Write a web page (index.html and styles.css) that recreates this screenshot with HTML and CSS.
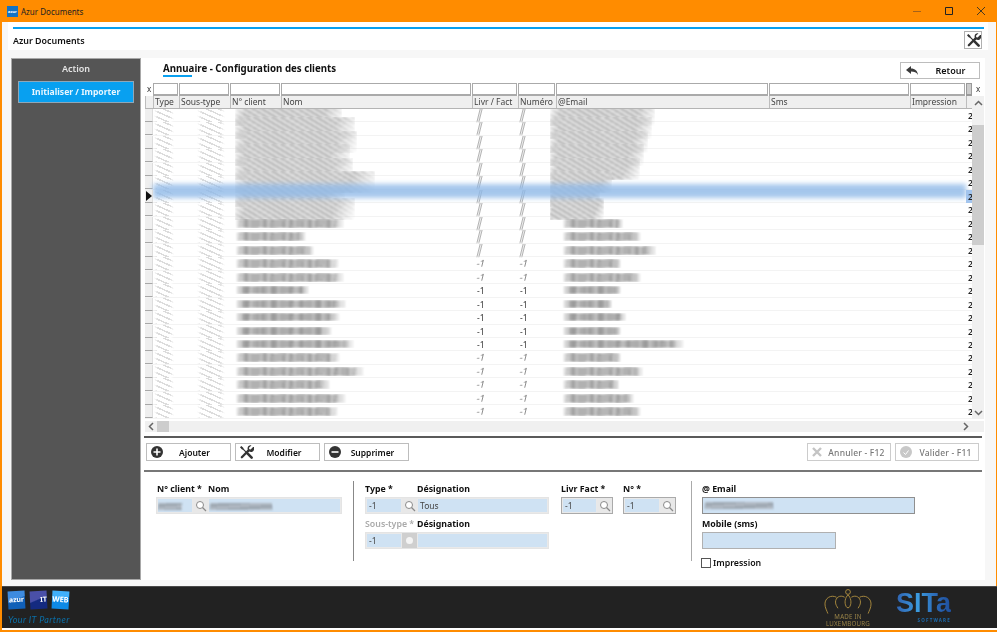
FILE: index.html
```html
<!DOCTYPE html>
<html lang="fr">
<head>
<meta charset="utf-8">
<title>Azur Documents</title>
<link rel="stylesheet" href="styles.css">
</head>
<body>
<header class="titlebar">
  <span class="app-ico">azur</span>
  <span class="app-name">Azur Documents</span>
  <span class="win-ctl">
    <svg width="12" height="12" viewBox="0 0 12 12"><path d="M2 6.500h8" stroke="#a5621a" fill="none"/></svg>
    <svg width="12" height="12" viewBox="0 0 12 12"><path d="M2.500 2.500h7v7h-7z" stroke="#222" fill="none"/></svg>
    <svg width="12" height="12" viewBox="0 0 12 12"><path d="M2 2l8 8M10 2l-8 8" stroke="#4a3a20" fill="none"/></svg>
  </span>
</header>
<div class="client">
  <div class="appbar">
    <div class="appbar-in">
      <strong>Azur Documents</strong>
      <button class="tool-btn"><svg width="15" height="15" viewBox="0 0 16 16"><use href="#tools"/></svg></button>
    </div>
  </div>
  <div class="work">
    <aside class="side">
      <div class="side-title">Action</div>
      <button class="side-btn">Initialiser / Importer</button>
    </aside>
    <main class="panel">
      <div class="panel-head">
        <h1 class="panel-title">Annuaire - Configuration des clients</h1>
        <button class="btn back"><svg width="14" height="12" viewBox="0 0 14 12"><path d="M1 5l5-4v2.600c4 0 6.500 2.200 7 6.400-1.500-2.600-3.700-3.400-7-3.400V9z" fill="#3a3a3a"/></svg><span>Retour</span></button>
      </div>
      <section class="grid">
        <div class="table">
          <div class="row filters"><div class="x">x</div><div class="f"></div><div class="f"></div><div class="f"></div><div class="f"></div><div class="f"></div><div class="f"></div><div class="f"></div><div class="f"></div><div class="f"></div><div class="f n"></div></div>
          <div class="row heads"><div></div><div>Type</div><div>Sous-type</div><div>N° client</div><div>Nom</div><div>Livr / Fact</div><div>Numéro</div><div>@Email</div><div>Sms</div><div>Impression</div><div></div></div>
          <div class="rows">
            <div class="row r s2"><div class="h"></div><div class="t"></div><div class="st"></div><div class="cl"><span class="sm" style="width:107px"></span></div><div></div><div class="lv"></div><div class="nm"></div><div class="em"><span class="sm" style="width:105px"></span></div><div></div><div></div><div class="d">2</div></div>
            <div class="row r s2"><div class="h"></div><div class="t"></div><div class="st"></div><div class="cl"><span class="sm" style="width:120px"></span></div><div></div><div class="lv"></div><div class="nm"></div><div class="em"><span class="sm" style="width:102px"></span></div><div></div><div></div><div class="d">2</div></div>
            <div class="row r s2"><div class="h"></div><div class="t"></div><div class="st"></div><div class="cl"><span class="sm" style="width:122px"></span></div><div></div><div class="lv"></div><div class="nm"></div><div class="em"><span class="sm" style="width:98px"></span></div><div></div><div></div><div class="d">2</div></div>
            <div class="row r s2"><div class="h"></div><div class="t"></div><div class="st"></div><div class="cl"><span class="sm" style="width:115px"></span></div><div></div><div class="lv"></div><div class="nm"></div><div class="em"><span class="sm" style="width:94px"></span></div><div></div><div></div><div class="d">2</div></div>
            <div class="row r s2"><div class="h"></div><div class="t"></div><div class="st"></div><div class="cl"><span class="sm" style="width:118px"></span></div><div></div><div class="lv"></div><div class="nm"></div><div class="em"><span class="sm" style="width:90px"></span></div><div></div><div></div><div class="d">2</div></div>
            <div class="row r s2"><div class="h"></div><div class="t"></div><div class="st"></div><div class="cl"><span class="sm" style="width:140px"></span></div><div></div><div class="lv"></div><div class="nm"></div><div class="em"><span class="sm" style="width:62px"></span></div><div></div><div></div><div class="d">2</div></div>
            <div class="row r s2 sel"><div class="h"><svg width="6" height="10" viewBox="0 0 6 10"><path d="M0 0l6 5-6 5z" fill="#111"/></svg></div><div class="t"></div><div class="st"></div><div class="cl"><span class="sm" style="width:110px"></span></div><div></div><div class="lv"></div><div class="nm"></div><div class="em"><span class="sm" style="width:50px"></span></div><div></div><div></div><div class="d">2</div></div>
            <div class="row r s2"><div class="h"></div><div class="t"></div><div class="st"></div><div class="cl"><span class="sm" style="width:120px"></span></div><div></div><div class="lv"></div><div class="nm"></div><div class="em"><span class="sm" style="width:54px"></span></div><div></div><div></div><div class="d">2</div></div>
            <div class="row r s1"><div class="h"></div><div class="t"></div><div class="st"></div><div class="cl"><span class="sm" style="width:110px"></span></div><div></div><div class="lv"></div><div class="nm"></div><div class="em"><span class="sm" style="width:62px"></span></div><div></div><div></div><div class="d">2</div></div>
            <div class="row r s1"><div class="h"></div><div class="t"></div><div class="st"></div><div class="cl"><span class="sm" style="width:72px"></span></div><div></div><div class="lv"></div><div class="nm"></div><div class="em"><span class="sm" style="width:80px"></span></div><div></div><div></div><div class="d">2</div></div>
            <div class="row r s1"><div class="h"></div><div class="t"></div><div class="st"></div><div class="cl"><span class="sm" style="width:80px"></span></div><div></div><div class="lv"></div><div class="nm"></div><div class="em"><span class="sm" style="width:95px"></span></div><div></div><div></div><div class="d">2</div></div>
            <div class="row r s1"><div class="h"></div><div class="t"></div><div class="st"></div><div class="cl"><span class="sm" style="width:105px"></span></div><div></div><div class="lv">-1</div><div class="nm">-1</div><div class="em"><span class="sm" style="width:60px"></span></div><div></div><div></div><div class="d">2</div></div>
            <div class="row r s1"><div class="h"></div><div class="t"></div><div class="st"></div><div class="cl"><span class="sm" style="width:110px"></span></div><div></div><div class="lv">-1</div><div class="nm">-1</div><div class="em"><span class="sm" style="width:80px"></span></div><div></div><div></div><div class="d">2</div></div>
            <div class="row r s0"><div class="h"></div><div class="t"></div><div class="st"></div><div class="cl"><span class="sm" style="width:75px"></span></div><div></div><div class="lv">-1</div><div class="nm">-1</div><div class="em"><span class="sm" style="width:60px"></span></div><div></div><div></div><div class="d">2</div></div>
            <div class="row r s0"><div class="h"></div><div class="t"></div><div class="st"></div><div class="cl"><span class="sm" style="width:112px"></span></div><div></div><div class="lv">-1</div><div class="nm">-1</div><div class="em"><span class="sm" style="width:51px"></span></div><div></div><div></div><div class="d">2</div></div>
            <div class="row r s0"><div class="h"></div><div class="t"></div><div class="st"></div><div class="cl"><span class="sm" style="width:106px"></span></div><div></div><div class="lv">-1</div><div class="nm">-1</div><div class="em"><span class="sm" style="width:65px"></span></div><div></div><div></div><div class="d">2</div></div>
            <div class="row r s0"><div class="h"></div><div class="t"></div><div class="st"></div><div class="cl"><span class="sm" style="width:98px"></span></div><div></div><div class="lv">-1</div><div class="nm">-1</div><div class="em"><span class="sm" style="width:60px"></span></div><div></div><div></div><div class="d">2</div></div>
            <div class="row r s0"><div class="h"></div><div class="t"></div><div class="st"></div><div class="cl"><span class="sm" style="width:120px"></span></div><div></div><div class="lv">-1</div><div class="nm">-1</div><div class="em"><span class="sm" style="width:123px"></span></div><div></div><div></div><div class="d">2</div></div>
            <div class="row r s1"><div class="h"></div><div class="t"></div><div class="st"></div><div class="cl"><span class="sm" style="width:106px"></span></div><div></div><div class="lv">-1</div><div class="nm">-1</div><div class="em"><span class="sm" style="width:60px"></span></div><div></div><div></div><div class="d">2</div></div>
            <div class="row r s1"><div class="h"></div><div class="t"></div><div class="st"></div><div class="cl"><span class="sm" style="width:130px"></span></div><div></div><div class="lv">-1</div><div class="nm">-1</div><div class="em"><span class="sm" style="width:82px"></span></div><div></div><div></div><div class="d">2</div></div>
            <div class="row r s1"><div class="h"></div><div class="t"></div><div class="st"></div><div class="cl"><span class="sm" style="width:96px"></span></div><div></div><div class="lv">-1</div><div class="nm">-1</div><div class="em"><span class="sm" style="width:58px"></span></div><div></div><div></div><div class="d">2</div></div>
            <div class="row r s1"><div class="h"></div><div class="t"></div><div class="st"></div><div class="cl"><span class="sm" style="width:112px"></span></div><div></div><div class="lv">-1</div><div class="nm">-1</div><div class="em"><span class="sm" style="width:73px"></span></div><div></div><div></div><div class="d">2</div></div>
            <div class="row r s1"><div class="h"></div><div class="t"></div><div class="st"></div><div class="cl"><span class="sm" style="width:104px"></span></div><div></div><div class="lv">-1</div><div class="nm">-1</div><div class="em"><span class="sm" style="width:80px"></span></div><div></div><div></div><div class="d">2</div></div>
          </div>
        </div>
        <div class="vbar">
          <div class="vx">x</div>
          <div class="varrow"><svg width="9" height="6" viewBox="0 0 9 6"><path d="M1 5l3.500-3.500L8 5" fill="none" stroke="#666" stroke-width="1.500"/></svg></div>
          <div class="vtrack"><div class="vthumb"></div></div>
          <div class="varrow"><svg width="9" height="6" viewBox="0 0 9 6"><path d="M1 1l3.500 3.500L8 1" fill="none" stroke="#666" stroke-width="1.500"/></svg></div>
        </div>
        <div class="hbar"><span class="harrow"><svg width="6" height="9" viewBox="0 0 6 9"><path d="M5 1L1.500 4.500 5 8" fill="none" stroke="#666" stroke-width="1.500"/></svg></span><span class="hthumb"></span><span class="harrow end"><svg width="6" height="9" viewBox="0 0 6 9"><path d="M1 1l3.500 3.500L1 8" fill="none" stroke="#666" stroke-width="1.500"/></svg></span></div>
      </section>
      <div class="actions">
        <button class="btn act"><svg width="14" height="14" viewBox="0 0 14 14"><circle cx="7" cy="7" r="6" fill="#333"/><path d="M7 3.500v7M3.500 7h7" stroke="#fff" stroke-width="1.600"/></svg><span>Ajouter</span></button>
        <button class="btn act"><svg width="15" height="15" viewBox="0 0 16 16"><use href="#tools"/></svg><span>Modifier</span></button>
        <button class="btn act"><svg width="14" height="14" viewBox="0 0 14 14"><circle cx="7" cy="7" r="6" fill="#333"/><path d="M3.500 7h7" stroke="#fff" stroke-width="1.600"/></svg><span>Supprimer</span></button>
        <span class="spacer"></span>
        <button class="btn act off"><svg width="12" height="12" viewBox="0 0 12 12"><path d="M2 2l8 8M10 2l-8 8" stroke="#c4c4c4" stroke-width="2.400"/></svg><span>Annuler - F12</span></button>
        <button class="btn act off"><svg width="14" height="14" viewBox="0 0 14 14"><circle cx="7" cy="7" r="6" fill="#c8c8c8"/><path d="M4.500 7.500l2 2 3-4" stroke="#fff" fill="none"/></svg><span>Valider - F11</span></button>
      </div>
      <form class="form">
        <div class="fcol c1">
          <div class="labels"><label class="lb-a">N° client *</label><label>Nom</label></div>
          <div class="combo wide">
            <span class="val code"><i class="blur-txt b1"></i></span>
            <span class="mag"><svg width="12" height="12" viewBox="0 0 12 12"><use href="#mag"/></svg></span>
            <span class="val grow"><i class="blur-txt b2"></i></span>
          </div>
        </div>
        <div class="fcol c2">
          <div class="labels"><label class="lb-b">Type *</label><label>Désignation</label></div>
          <div class="combo">
            <span class="val code2">-1</span>
            <span class="mag"><svg width="12" height="12" viewBox="0 0 12 12"><use href="#mag"/></svg></span>
            <span class="val grow">Tous</span>
          </div>
          <div class="labels second"><label class="lb-b muted">Sous-type *</label><label>Désignation</label></div>
          <div class="combo">
            <span class="val code2">-1</span>
            <span class="mag dis"><i></i></span>
            <span class="val grow"></span>
          </div>
        </div>
        <div class="fcol c3">
          <div class="labels"><label>Livr Fact *</label></div>
          <div class="combo small dark">
            <span class="val grow">-1</span>
            <span class="mag"><svg width="12" height="12" viewBox="0 0 12 12"><use href="#mag"/></svg></span>
          </div>
        </div>
        <div class="fcol c4">
          <div class="labels"><label>N° *</label></div>
          <div class="combo small dark">
            <span class="val grow">-1</span>
            <span class="mag"><svg width="12" height="12" viewBox="0 0 12 12"><use href="#mag"/></svg></span>
          </div>
        </div>
        <div class="fcol c5">
          <div class="labels"><label>@ Email</label></div>
          <div class="field email"><i class="blur-txt b3"></i></div>
          <div class="labels second"><label>Mobile (sms)</label></div>
          <div class="field mobile"></div>
          <div class="check"><span class="box"></span><label>Impression</label></div>
        </div>
      </form>
    </main>
  </div>
</div>
<footer class="foot">
  <div class="brand">
    <div class="tiles"><span class="tile azur">azur</span><span class="tile it">IT</span><span class="tile web">WEB</span></div>
    <div class="slogan">Your IT Partner</div>
  </div>
  <div class="made">
    <svg width="50" height="30" viewBox="0 0 50 30"><g fill="none" stroke="#a98a3e"><circle cx="25" cy="3.500" r="2.500"/><path d="M25 6.500c-3 3-4 8-2 12 1 2 3 2 4 0 2-4 1-9-2-12z"/><path d="M21.500 9c-5-3-9.500.5-9.500 5 0 3 1.500 4.500 2.500 6.500M28.500 9c5-3 9.500.5 9.500 5 0 3-1.500 4.500-2.500 6.500"/><path d="M13 9C7 6 1 10 1 16c0 4 2 7 3 10M37 9c6-3 12 1 12 7 0 4-2 7-3 10"/></g></svg>
    <span>MADE IN<br>LUXEMBOURG</span>
  </div>
  <div class="sita"><span class="sita-name">SITa</span><span class="sita-sub">SOFTWARE</span></div>
</footer>
<svg class="defs" width="0" height="0">
  <symbol id="tools" viewBox="0 0 16 16"><path d="M2.500 2.500L13 13" fill="none" stroke="#333" stroke-width="1.300"/><path d="M1 2.500L2.500 1 5 3.500 3.500 5z" fill="#333"/><path d="M9 9L13.500 13.500" fill="none" stroke="#333" stroke-width="2.800" stroke-linecap="round"/><path d="M3 13L10 6" fill="none" stroke="#333" stroke-width="2.400" stroke-linecap="round"/><path d="M15 2.200l-2.600 2.600-1.400-.4-.4-1.400L13.200.4c-2-.5-4.500 1-4 4 .3 2 2.700 3.600 5 2.800 1.700-.7 2.400-3 1.800-5z" fill="#333"/></symbol>
  <symbol id="mag" viewBox="0 0 12 12"><circle cx="5" cy="5" r="3.500" fill="#fff" stroke="#8a8a8a"/><path d="M7.500 7.500L11 11" stroke="#8a8a8a" stroke-width="1.300"/></symbol>
</svg>
</body>
</html>
```
FILE: styles.css
```css
* { box-sizing: border-box; }
html, body { margin: 0; padding: 0; }
body {
  width: 997px; height: 632px; overflow: hidden;
  display: flex; flex-direction: column;
  background: #ff8c00; color: #111;
  font: 10px "Noto Sans", "Open Sans", sans-serif;
  padding: 0 1px 2px 2px;
}
button { font: inherit; color: inherit; cursor: default; padding: 0; background: #fff; }
.defs { position: absolute; }

.titlebar { height: 22px; flex: none; display: flex; align-items: center; margin: 0 -1px 0 -2px; padding-left: 7px; }
.app-ico { width: 11px; height: 11px; background: #1273c4; color: #fff; font-size: 4px; font-weight: 700; line-height: 11px; text-align: center; overflow: hidden; }
.app-name { margin-left: 3px; font-size: 8px; color: #222; }
.win-ctl { margin-left: auto; display: flex; gap: 20px; padding-right: 10px; }

.client { flex: 1; min-height: 0; display: flex; flex-direction: column; background: #f7f7f7; filter: blur(.25px); }
.appbar { flex: none; margin: 0 8px 0 6px; height: 28px; background: #fff; padding: 5px 4px 0 5px; }
.appbar-in { height: 23px; border-top: 2px solid #08a0f0; display: flex; align-items: flex-start; justify-content: space-between; }
.appbar-in strong { font-size: 8.900px; font-weight: 600; padding-top: 5px; }
.tool-btn { width: 18px; height: 18px; margin-top: 2px; margin-right: 2px; border: 1px solid #b0b0b0; display: flex; align-items: center; justify-content: center; }

.work { flex: 1; min-height: 0; display: flex; margin: 8px 11px 6px 9px; }
.side { width: 130px; flex: none; background: #555; border: 1px solid #a8a8a8; padding: 0 6px; display: flex; flex-direction: column; }
.side-title { color: #e4e4e4; font-weight: 600; font-size: 9px; text-align: center; height: 22px; line-height: 20px; }
.side-btn { height: 22px; background: #08a0f0; border: 1px solid #8fa7b8; color: #e8f6ff; font-weight: 700; font-size: 8.600px; }

.panel { flex: 1; min-width: 0; background: #fff; padding: 0 3px 0 4px; display: flex; flex-direction: column; }
.panel-head { height: 25px; flex: none; display: flex; align-items: flex-start; justify-content: space-between; padding: 4px 2px 0 18px; }
.panel-title { margin: 0; font-size: 9.700px; font-weight: 700; line-height: 13px; }
.panel-title::after { content: ""; display: block; width: 29px; height: 2px; background: #08a0f0; }
.btn { border: 1px solid #bdbdbd; background: #fff; display: flex; align-items: center; font-weight: 600; }
.back { width: 80px; height: 17px; padding-left: 4px; font-size: 9px; }
.back span { flex: 1; text-align: center; padding-left: 3px; }

.grid { display: grid; grid-template-columns: 827px 12px; grid-template-rows: 336px 13px; flex: none; }
.table { min-width: 0; overflow: hidden; }
.row { display: grid; grid-template-columns: 8px 26px 51px 51px 191px 46px 38px 213px 141px 56px 6px; }
.filters { height: 13px; background: #fff; }
.x { font-size: 8px; text-align: center; line-height: 12px; color: #333; }
.f { border: 1px solid #aaa; border-bottom-width: 2px; margin-right: 1px; }
.f.n { background: #ccc; margin-right: 0; border-color: #999; }
.heads { height: 13px; background: #efefef; border-bottom: 1px solid #b4b4b4; font-size: 8.500px; line-height: 12px; color: #444; overflow: hidden; white-space: nowrap; }
.heads > div { border-left: 1px solid #bdbdbd; padding-left: 1px; overflow: hidden; }
.rows { height: 310px; overflow: hidden; }
.r { height: 13.470px; position: relative; border-bottom: 1px solid #f3f3f3; }
.r > div { position: relative; min-width: 0; }
.h { background: #efefef; border-bottom: 1px solid #a8a8a8; border-right: 1px solid #ddd; display: flex; align-items: center; padding-left: 1px; }
.t::before, .st::before { content: ""; position: absolute; top: 0; height: 13px; background: repeating-linear-gradient(24deg, #dcdcdc 0 1.500px, #fff 1.500px 5px); filter: blur(.7px); -webkit-mask-image: linear-gradient(90deg, transparent, #000 20%, #000 80%, transparent); mask-image: linear-gradient(90deg, transparent, #000 20%, #000 80%, transparent); }
.t::before { left: 1px; width: 20px; }
.st::before { left: 18px; width: 28px; }
.sm { position: absolute; left: 5px; top: 2px; height: 8px; filter: blur(1px); background: repeating-linear-gradient(92deg, transparent 0 5px, rgba(255,255,255,.2) 5px 9px), repeating-linear-gradient(4deg, #8a8a8a 0 1.500px, #bdbdbd 1.500px 3px); -webkit-mask-image: linear-gradient(90deg, transparent, #000 8px, #000 88%, transparent); mask-image: linear-gradient(90deg, transparent, #000 8px, #000 88%, transparent); }
.s2 .sm { top: -5px; height: 22px; filter: blur(1.100px); background: repeating-linear-gradient(31deg, #a4a4a4 0 1.300px, #d4d4d4 1.300px 3.200px, #ededed 3.200px 4.600px); -webkit-mask-image: linear-gradient(115deg, transparent, #000 12%, #000 80%, transparent); mask-image: linear-gradient(115deg, transparent, #000 12%, #000 80%, transparent); }
.s1 .sm { top: 2px; height: 9px; background: repeating-linear-gradient(92deg, transparent 0 5px, rgba(255,255,255,.2) 5px 9px), repeating-linear-gradient(9deg, #8a8a8a 0 1.300px, #c4c4c4 1.300px 3px); }
.em .sm { left: 6px; }
.s2 .em .sm { left: -6px; }
.lv, .nm { font-size: 8.500px; line-height: 13px; color: #333; filter: blur(.3px); }
.lv { padding-left: 5px; }
.nm { padding-left: 2px; }
.s1 .lv, .s2 .lv, .s1 .nm, .s2 .nm { transform: skewX(-14deg); color: #666; }
.lv:empty::before, .nm:empty::before { content: ""; display: block; width: 3px; height: 13px; margin-left: 1px; background: repeating-linear-gradient(90deg, #b4b4b4 0 1px, #ececec 1px 2px); filter: blur(.6px); }
.d { font-size: 8.500px; line-height: 13px; overflow: hidden; padding-left: 2px; font-weight: 600; color: #222; z-index: 3; }
.sel::after { content: ""; position: absolute; left: 8px; right: 6px; top: -6px; height: 14px; background: #8fb9e8; opacity: .8; filter: blur(2.500px); z-index: 2; pointer-events: none; }
.sel .h { z-index: 4; }
.sel .d { background: #a3c5ee; }

.vbar { display: flex; flex-direction: column; background: #fff; }
.vx { height: 13px; font-size: 8px; line-height: 12px; text-align: center; color: #333; }
.varrow { height: 13px; background: #f0f0f0; display: flex; align-items: center; justify-content: center; }
.vtrack { flex: 1; background: #f0f0f0; padding-top: 16px; }
.vthumb { height: 120px; background: #cdcdcd; }
.hbar { grid-column: 1 / span 2; height: 11px; margin-top: 2px; background: #f0f0f0; display: flex; }
.harrow { width: 12px; display: flex; align-items: center; justify-content: center; }
.harrow.end { margin-left: auto; margin-right: 12px; }
.hthumb { width: 12px; background: #cdcdcd; }

.actions { flex: none; height: 36px; margin: 4px 0 0 -1px; border-top: 2px solid #5a5a5a; border-bottom: 2px solid #777; display: flex; align-items: center; gap: 4px; padding: 0 3px 4px 2px; }
.act { width: 85px; height: 18px; padding-left: 3px; font-size: 8.500px; }
.act span { flex: 1; text-align: center; padding-right: 5px; }
.spacer { flex: 1; }
.off { width: 84px; color: #777; font-weight: 500; border-color: #ccc; }
.off span { letter-spacing: .2px; padding-right: 0; }

.form { flex: 1; display: flex; padding: 8px 0 0 11px; font-size: 8.500px; }
.fcol { display: flex; flex-direction: column; }
.labels { display: flex; height: 17px; font-weight: 700; font-size: 8.800px; line-height: 13px; align-items: flex-end; padding-bottom: 1px; white-space: nowrap; }
.lb-a { width: 52px; padding-left: 1px; }
.lb-b { width: 52px; }
.muted { color: #aaa; font-weight: 600; }
.second { margin-top: 1px; height: 17px; }
.combo { display: flex; height: 17px; background: #eee; border: 1px solid #e4e4e4; }
.val { background: #cfe2f3; line-height: 14px; padding-left: 2px; color: #444; font-size: 8.500px; display: block; border: 1px solid #e9e9e9; white-space: nowrap; overflow: hidden; position: relative; }
.code, .code2 { width: 36px; }
.grow { flex: 1; }
.mag { width: 15px; flex: none; display: flex; align-items: center; justify-content: center; background: #e8e8e8; }
.mag.dis { background: #cfcfcf; }
.mag.dis i { width: 7px; height: 7px; border-radius: 50%; background: #f4f4f4; }
.dark { border-color: #aaa; }
.blur-txt { position: absolute; top: 4px; height: 7px; background: repeating-linear-gradient(80deg, #8a94a0 0 1.500px, #c4ccd4 1.500px 3px); filter: blur(.8px); }
.b1 { left: 0; width: 24px; }
.b2 { left: 1px; width: 62px; }
.b3 { left: 2px; width: 68px; }
.c1 { width: 186px; }
.c2 { width: 184px; margin-left: 23px; position: relative; }
.c2::before, .c5::before { content: ""; position: absolute; top: 1px; width: 1px; height: 80px; background: #888; }
.c2::before { left: -12px; }
.c3 { width: 52px; margin-left: 12px; }
.c4 { width: 53px; margin-left: 10px; }
.c5 { width: 213px; margin-left: 26px; position: relative; }
.c5::before { left: -11px; background: #aaa; }
.field { height: 17px; background: #cfe2f3; border: 1px solid #8f8f8f; position: relative; }
.mobile { width: 134px; border-color: #b0b0b0; }
.check { display: flex; align-items: center; gap: 2px; margin-top: 8px; margin-left: -1px; font-weight: 600; font-size: 8.800px; }
.box { width: 10px; height: 10px; border: 1px solid #555; background: #fff; }

.foot { flex: none; height: 44px; margin: 0 -1px 0 0; background: #222; border-top: 1px solid #4a4a4a; border-bottom: 2px solid #fff; display: flex; align-items: flex-start; padding-left: 6px; filter: blur(.25px); }
.brand { width: 816px; padding-top: 4px; }
.tiles { display: flex; gap: 5px; }
.tile { width: 17px; height: 18px; color: #fff; font-size: 7px; font-weight: 700; line-height: 17px; text-align: center; transform: rotate(-3deg); }
.azur { background: linear-gradient(160deg, #3d8be0 45%, #1060b8 50%); }
.it { background: linear-gradient(160deg, #4a50a8 45%, #142a80 50%); text-align: right; }
.web { background: linear-gradient(160deg, #40b0fa 45%, #0e8ae6 50%); font-size: 7.500px; transform: rotate(3deg); }
.slogan { margin-top: 5px; font: italic 9px Lato, sans-serif; letter-spacing: .4px; color: #0a6fa8; }
.made { width: 48px; display: flex; flex-direction: column; align-items: center; color: #9a8448; font-size: 6.200px; line-height: 7px; text-align: center; padding-top: 1px; letter-spacing: .2px; white-space: nowrap; }
.made svg { width: 48px; flex: none; }
.made span { margin-top: -5px; }
.sita { display: flex; flex-direction: column; align-items: flex-end; width: 55px; margin-left: 24px; padding-top: 4px; }
.sita-name { font: 700 27px/24px "Liberation Sans", sans-serif; background: linear-gradient(90deg, #2f62b0 0%, #3c9ce0 40%, #2a66b4 75%, #1e4f9c 100%); -webkit-background-clip: text; background-clip: text; color: transparent; }
.sita-sub { font-size: 4.500px; line-height: 6px; letter-spacing: 1.200px; color: #1c6cb0; font-weight: 700; margin-top: 2px; }
```
